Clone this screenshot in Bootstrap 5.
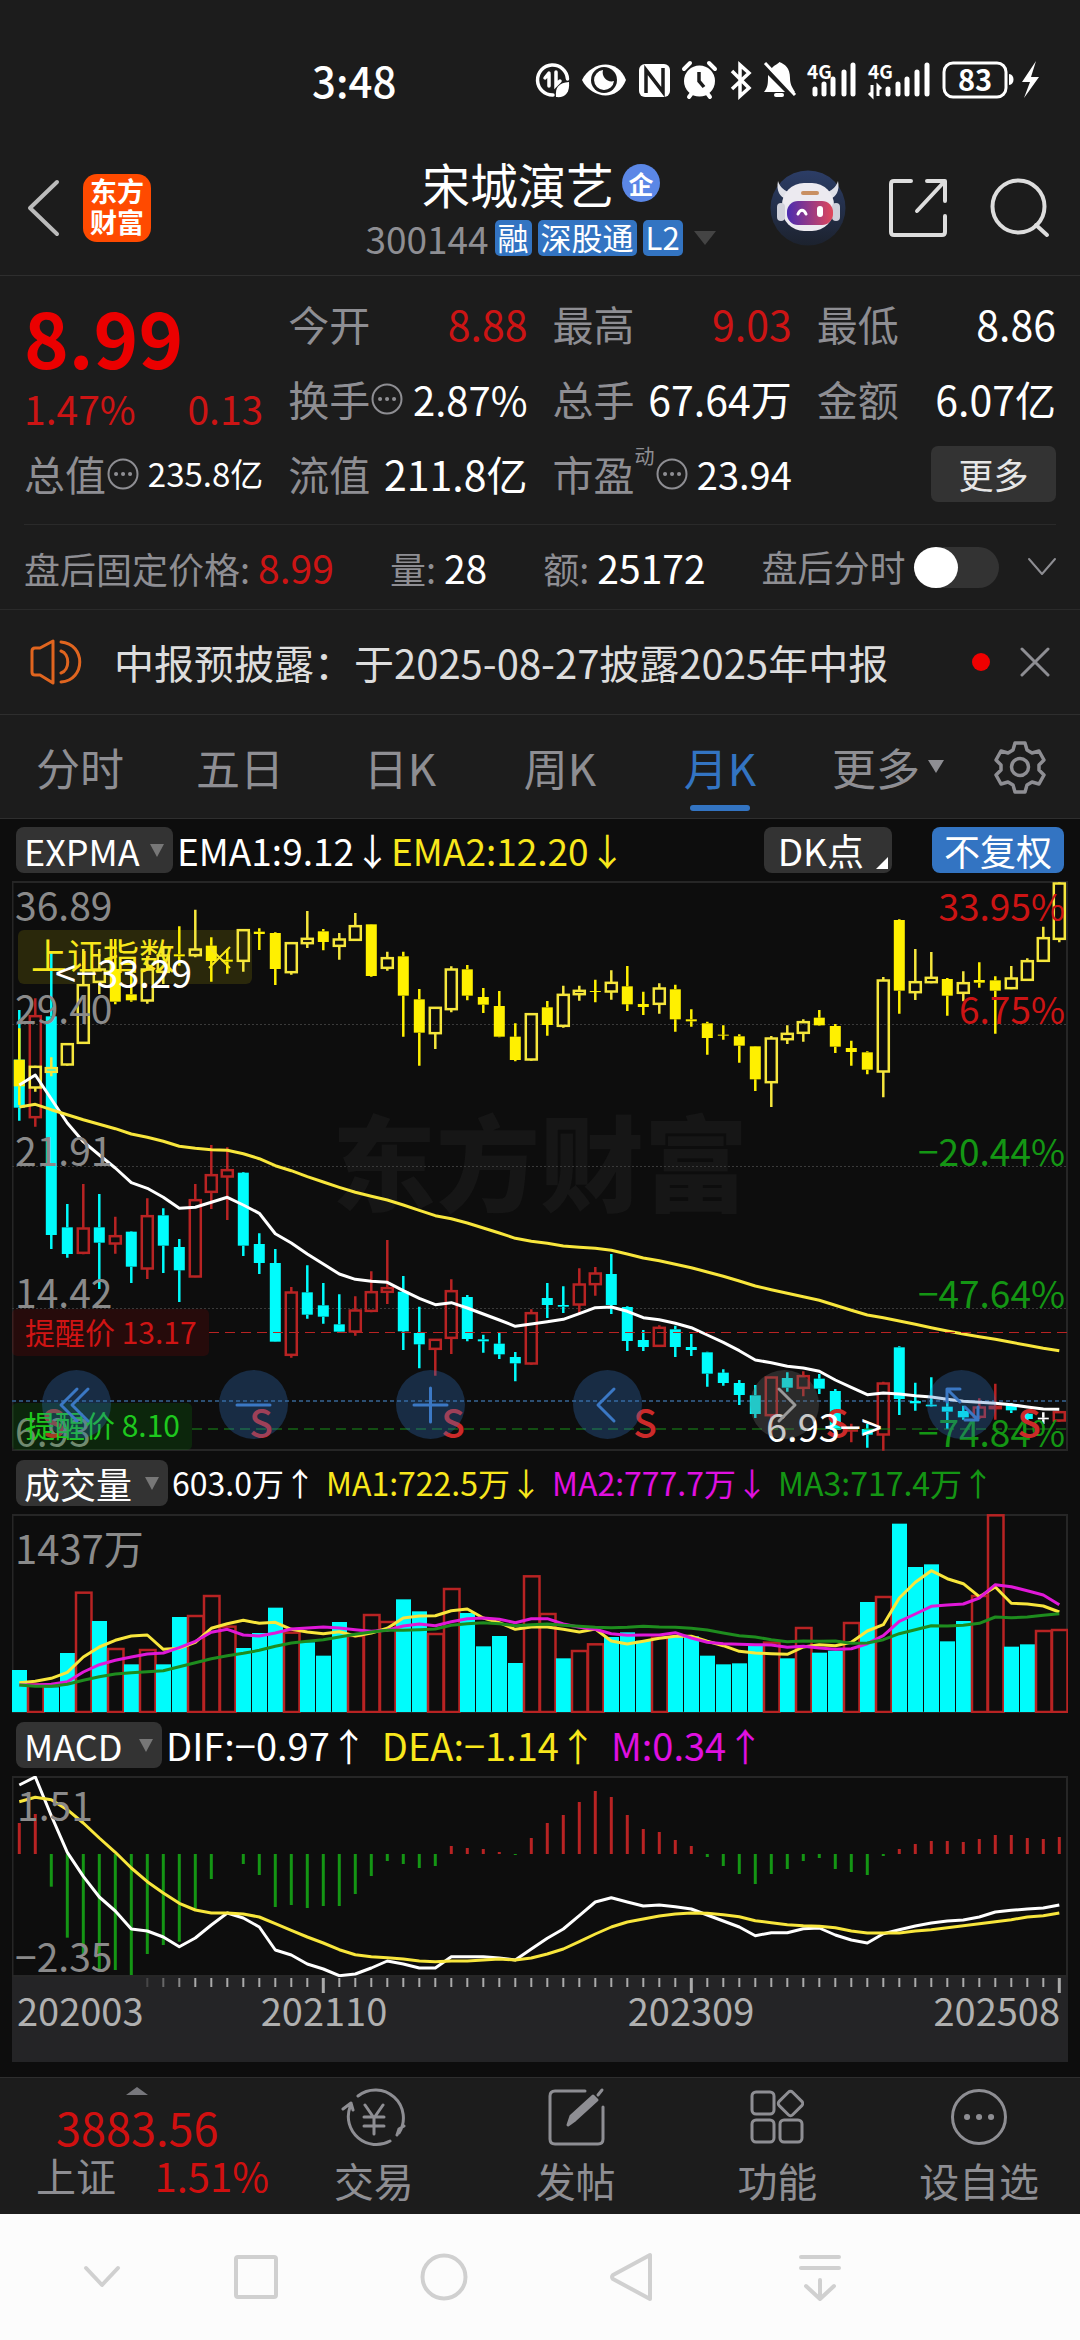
<!DOCTYPE html>
<html lang="zh-CN" data-bs-theme="dark">
<head>
<meta charset="utf-8">
<meta name="viewport" content="width=device-width, initial-scale=1">
<title>宋城演艺 300144</title>
<link href="https://cdn.jsdelivr.net/npm/bootstrap@5.3.0/dist/css/bootstrap.min.css" rel="stylesheet">
<style>
:root{--bg:#1c1c1c;--ink:#0d0d0d;--chip:#333;--blue:#3374c2;--dim:#8e8e93;--up:#cc1414;--edge:#2e2e2e}
body{background:var(--bg);color:#fff;font-family:"Noto Sans CJK SC",sans-serif;font-size:36px;line-height:1.2}
button,a{color:inherit;text-decoration:none}
.plain{background:none;border:0;padding:0;line-height:1}
svg{display:block}
.stroke{fill:none;stroke:currentColor;stroke-linecap:round;stroke-linejoin:round}
.dim{color:var(--dim)}.up{color:var(--up)}
.yel{color:#f8e71c}.mag{color:#e010e0}.grn{color:#149614}
.side{flex:1 1 0}

.sysbar{height:140px;padding:20px 38px 0 312px}
.clock{font-size:42px;font-weight:500}
.topbar{height:136px;border-bottom:1px solid var(--edge);padding:0 30px 0 24px}
.topbar .side:last-child{gap:43px}
.brand{width:68px;height:68px;border-radius:14px;background:#ff4a00;font-size:27px;font-weight:700;line-height:31px;padding-top:1px;margin-left:21px}
.stock{font-size:48px;line-height:54px;font-weight:400}
.corp{width:38px;height:38px;border-radius:50%;background:#5b87e6;font-size:25px;font-weight:700}
.code{font-size:37px;line-height:44px;gap:6px;margin-top:6px}
.flag{background:var(--blue);border-radius:5px;font-size:31px;line-height:34px;height:36px;padding:0 3px}

.quote{padding:10px 24px 13px}
.cells{display:grid;grid-template-columns:repeat(4,minmax(0,1fr));column-gap:25px;grid-auto-rows:75px}
.cell-q{display:flex;align-items:center;white-space:nowrap;font-size:41px}
.cell-q .dim{font-size:41px}
.last{color:#eb0000;font-size:76px;font-weight:700;line-height:78px}
.lead-cell{grid-row:span 2;padding-top:6px;gap:10px}
.lead-cell .cell-q{font-size:39px}
.mid-num{font-size:40px}
.sm-num{font-size:38px}
.sm-cap{font-size:33px}
.tiny{font-size:20px;line-height:24px;height:60px}
.morebtn{width:125px;height:56px;border-radius:7px;background:var(--chip);font-size:35px;color:#e6e6e6;line-height:50px}
.after{height:85px;border-top:1px solid #2a2a2a;margin:0 24px;font-size:36px;white-space:nowrap;gap:56px}
.after b{font-weight:400;font-size:39px}
.tog.form-check-input{width:85px;height:41px;margin:0;border:0;border-radius:21px;background-color:#333;background-image:none;position:relative}
.tog::before{content:"";position:absolute;left:0;top:0;width:44px;height:41px;border-radius:50%;background:#fff}
.news{height:105px;border-top:1px solid #2a2a2a;padding:0 30px;font-size:40px;color:#ddd}
.news a{padding-left:32px}
.news button{margin-left:30px}
.reddot{width:18px;height:18px;border-radius:50%;background:#f00000}
.tabs{height:105px;border-top:1px solid var(--edge);border-bottom:1px solid var(--edge)}
.tabs button{flex:4 1 0;height:100%;font-size:44px;color:var(--dim);position:relative}
.tabs .gear{flex:3 1 0}
.tabs .on{color:var(--blue)}
.tabs .on::after{content:"";position:absolute;left:50%;bottom:7px;width:60px;height:6px;margin-left:-30px;border-radius:3px;background:var(--blue)}

.charts{background:var(--ink);padding:0 12px 15px}
.legend-row{height:62px;padding:0 4px;white-space:nowrap;font-size:37px}
.legend-row.low{height:63px}
.pick{position:relative;display:block}
.pick select{appearance:none;display:block;height:46px;border:0;border-radius:8px;background:var(--chip);color:#fff;font-size:36px;line-height:46px;padding:0 0 0 8px;width:157px}
.pick svg{position:absolute;right:9px;top:17px}
.pick.w2 select{width:152px}.pick.w3 select{width:146px}
.vol-nums{font-size:32px;gap:10px}
.macd-nums{font-size:38px;gap:14px}
.chip-btn{height:46px;border-radius:8px;background:var(--chip);font-size:37px;padding:0 28px 0 14px;position:relative}
.chip-btn.solid{background:var(--blue);padding:0 12px;font-size:36px;margin-left:40px}
.pane{position:relative}
.pane svg.plot{width:100%;height:auto}
.plot text{font-family:"Noto Sans CJK SC",sans-serif}
.tools{position:absolute;left:30px;right:72px;bottom:12px}
.tools button{width:69px;height:69px;border-radius:50%;background:rgba(51,116,196,.3);color:#3b78c4}
.tools button:disabled{background:rgba(100,100,100,.35);color:#999}
.axis{background:#242426}

.dock{border-top:1px solid var(--edge);height:137px;color:var(--dim)}
.idx{width:273px;padding:9px 0 0}
.idx .n1{font-size:45px;line-height:48px;padding-left:56px}
.idx .n2{font-size:40px;line-height:48px;padding-left:36px}
.idx .n1,.idx .n2 span{color:#d01010}
.dock .item{flex:1 1 0;font-size:40px;line-height:48px;padding-top:9px;gap:7px}
.phone{background:#fcfcfc;height:126px;color:#d0d0d0;padding-left:42px}
.phone button{width:188px}.phone button:first-child{width:120px}
</style>
<script src="https://cdn.jsdelivr.net/npm/bootstrap@5.3.0/dist/js/bootstrap.bundle.min.js"></script>
</head>
<body>
<div class="sysbar d-flex align-items-center justify-content-between">
  <span class="clock">3:48</span>
  <svg width="510" height="44" viewBox="532 59 510 44" fill="#fff" aria-hidden="true">
    <g fill="none" stroke="#fff" stroke-width="3.5" stroke-linecap="round">
      <path d="M553 96a15 15 0 1 1 14.500-16"/><path d="M549 75v12M549 74l-4 5M556 73v13l4-4"/>
    </g>
    <path d="M556 98c-1-10 3-14 13-15 1 11-4 16-13 15z"/>
    <path d="M582 81c9-18 35-23 44 0-9 23-35 18-44 0z"/><circle cx="604" cy="81" r="13" fill="#1c1c1c"/><path d="M603 71a10 10 0 1 0 11 11c-6 2-13-4-11-11z"/>
    <rect x="639" y="65" width="31" height="33" rx="6"/><path d="M646 94V71l17 22V69" fill="none" stroke="#1c1c1c" stroke-width="3.500"/>
    <circle cx="699.500" cy="82" r="15.500"/><path d="M699 73v9l5 6" fill="none" stroke="#1c1c1c" stroke-width="3.500"/><path d="M684 70l6-6M715 70l-6-6M689 98l3-4M710 98l-3-4" stroke="#fff" stroke-width="4" stroke-linecap="round"/>
    <path d="M732 72l17 17-9 8V66l9 8-17 16" fill="none" stroke="#fff" stroke-width="3.500"/>
    <path d="M764 93c4-5 4-8 4-17l17 17zM770 71c6-7 9-6 9-8 6 2 11 6 11 16 0 6 2 9 5 14l-2 1z"/><path d="M765 64l30 32" stroke="#fff" stroke-width="3"/><rect x="774" y="94" width="10" height="4" rx="2"/>
    <text x="807" y="80" font-size="19" font-weight="700" font-family="Noto Sans CJK SC">4G</text>
    <g stroke="#fff" stroke-width="5" stroke-linecap="round"><path d="M815 90v5M824 85v10M833 80v15M844 73v22M853 66v29"/><path d="M888 90v5M898 85v10M907 80v15M917 73v22M927 66v29"/></g>
    <path d="M872 86v11l-3-3M878 97V87l3 3" fill="none" stroke="#fff" stroke-width="3"/>
    <text x="868" y="80" font-size="19" font-weight="700" font-family="Noto Sans CJK SC">4G</text>
    <rect x="944" y="64" width="62" height="34" rx="9" fill="none" stroke="#fff" stroke-width="3"/><path d="M1009 75c6 0 6 11 0 11z"/>
    <text x="975" y="92" font-size="29" font-weight="700" text-anchor="middle" font-family="Noto Sans CJK SC">83</text>
    <path d="M1036 62l-14 21h8l-6 16 15-21h-8z"/>
  </svg>
</div>

<header class="topbar d-flex align-items-center">
  <div class="side d-flex align-items-center">
    <button class="plain" aria-label="返回"><svg class="stroke" width="38" height="60" viewBox="0 0 38 60" stroke-width="4" color="#bbb"><path d="M33 4L6 30l27 26"/></svg></button>
    <a href="#" class="brand text-center text-white d-block">东方<br>财富</a>
  </div>
  <div class="d-flex flex-column align-items-center ps-2">
    <div class="d-flex align-items-center gap-2"><h1 class="stock m-0">宋城演艺</h1><span class="corp d-flex align-items-center justify-content-center">企</span></div>
    <div class="code d-flex align-items-center dim">
      <span>300144</span><span class="flag text-white">融</span><span class="flag text-white">深股通</span><span class="flag text-white">L2</span>
      <svg class="ms-1" width="24" height="14" viewBox="0 0 24 14" fill="#444"><path d="M1 0h22L12 14z"/></svg>
    </div>
  </div>
  <div class="side d-flex align-items-center justify-content-end">
    <button class="plain" aria-label="助手"><svg width="76" height="76" viewBox="0 0 76 76">
      <defs><linearGradient id="rg" x1="0" x2="1"><stop offset="0" stop-color="#4b2bb0"/><stop offset="1" stop-color="#e0485a"/></linearGradient><linearGradient id="rb" x1="0" x2="0" y2="1"><stop offset="0" stop-color="#2c3d66"/><stop offset="1" stop-color="#1c222e"/></linearGradient></defs>
      <circle cx="38" cy="38" r="37.500" fill="url(#rb)"/>
      <path d="M8 11c-2 10 2 16 8 18l6-6C14 21 10 17 8 11zM68 11c2 10-2 16-8 18l-6-6c8-2 12-6 14-12z" fill="#dfe0e8"/>
      <rect x="12" y="13" width="52" height="48" rx="22" fill="#eceaf0"/><rect x="7" y="33" width="8" height="18" rx="4" fill="#cfd0da"/><rect x="62" y="33" width="8" height="18" rx="4" fill="#cfd0da"/>
      <rect x="17" y="31" width="46" height="24" rx="11" fill="url(#rg)"/><rect x="31" y="21" width="18" height="4" rx="2" fill="#c98f62"/>
      <path d="M28 44c2-5 6-5 8 0" fill="none" stroke="#fff" stroke-width="3" stroke-linecap="round"/><rect x="47" y="36" width="6" height="11" rx="3" fill="#fff"/>
    </svg></button>
    <button class="plain" aria-label="分享"><svg class="stroke" width="58" height="58" viewBox="0 0 58 58" stroke-width="4" color="#ddd"><path d="M22 2H5q-3 0-3 3v48q0 3 3 3h48q3 0 3-3V37M38 2h18v20M55 3L28 32"/></svg></button>
    <button class="plain" aria-label="搜索"><svg class="stroke" width="60" height="60" viewBox="0 0 60 60" stroke-width="4" color="#ddd"><circle cx="28.500" cy="28.500" r="26"/><path d="M46 47l11 10"/></svg></button>
  </div>
</header>

<section class="quote">
  <div class="cells">
    <div class="lead-cell d-flex flex-column justify-content-center">
      <div class="last">8.99</div>
      <div class="cell-q justify-content-between up"><span>1.47%</span><span>0.13</span></div>
    </div>
    <div class="cell-q justify-content-between"><span class="dim">今开</span><span class="up">8.88</span></div>
    <div class="cell-q justify-content-between"><span class="dim">最高</span><span class="up">9.03</span></div>
    <div class="cell-q justify-content-between"><span class="dim">最低</span><span>8.86</span></div>
    <div class="cell-q justify-content-between"><span class="dim d-flex align-items-center">换手<svg class="stroke" width="34" height="34" viewBox="0 0 34 34" stroke-width="2"><circle cx="17" cy="17" r="14.500"/><path d="M10 17h.1M17 17h.1M24 17h.1" stroke-width="4"/></svg></span><span class="mid-num">2.87%</span></div>
    <div class="cell-q justify-content-between"><span class="dim">总手</span><span>67.64万</span></div>
    <div class="cell-q justify-content-between"><span class="dim">金额</span><span>6.07亿</span></div>
    <div class="cell-q justify-content-between"><span class="dim d-flex align-items-center">总值<svg class="stroke" width="34" height="34" viewBox="0 0 34 34" stroke-width="2"><circle cx="17" cy="17" r="14.500"/><path d="M10 17h.1M17 17h.1M24 17h.1" stroke-width="4"/></svg></span><span class="sm-cap">235.8亿</span></div>
    <div class="cell-q justify-content-between"><span class="dim">流值</span><span>211.8亿</span></div>
    <div class="cell-q justify-content-between"><span class="dim d-flex align-items-center">市盈<small class="tiny">动</small><svg class="stroke" width="34" height="34" viewBox="0 0 34 34" stroke-width="2"><circle cx="17" cy="17" r="14.500"/><path d="M10 17h.1M17 17h.1M24 17h.1" stroke-width="4"/></svg></span><span class="sm-num">23.94</span></div>
    <div class="cell-q justify-content-end"><button class="plain morebtn">更多</button></div>
  </div>
</section>

<section class="after d-flex align-items-center">
  <span><span class="dim">盘后固定价格:</span> <b class="up">8.99</b></span>
  <span><span class="dim">量:</span> <b>28</b></span>
  <span><span class="dim">额:</span> <b>25172</b></span>
  <span class="d-flex align-items-center ms-auto"><label class="dim me-2" for="afterSw">盘后分时</label><input class="form-check-input tog" type="checkbox" role="switch" id="afterSw">
  <button class="plain dim ms-4 me-1 ps-1" aria-label="展开"><svg class="stroke" width="30" height="20" viewBox="0 0 30 20" stroke-width="2"><path d="M2 2l13 15L28 2"/></svg></button></span>
</section>

<section class="news d-flex align-items-center">
  <svg class="stroke" width="52" height="46" viewBox="0 0 52 46" stroke-width="3" color="#e0651f"><path d="M2 12q0-3 3-3h5L23 2v42L10 36H5q-3 0-3-3zM31 12c9 3 9 19 0 22M31 3c25 2 25 38 0 40"/></svg>
  <a href="#" class="flex-grow-1 text-nowrap">中报预披露：于2025-08-27披露2025年中报</a>
  <span class="reddot"></span>
  <button class="plain dim" aria-label="关闭"><svg class="stroke" width="30" height="30" viewBox="0 0 30 30" stroke-width="3"><path d="M2 2l26 26M28 2L2 28"/></svg></button>
</section>

<nav class="tabs d-flex align-items-center">
  <button class="plain">分时</button><button class="plain">五日</button><button class="plain">日K</button><button class="plain">周K</button><button class="plain on" aria-current="true">月K</button>
  <button class="plain"><span class="d-flex align-items-center justify-content-center gap-2 ps-3">更多<svg width="16" height="13" viewBox="0 0 16 13" fill="currentColor"><path d="M0 0h16L8 13z"/></svg></span></button>
  <button class="plain gear d-flex align-items-center justify-content-center" aria-label="设置"><svg class="stroke" width="54" height="54" viewBox="0 0 54 54" stroke-width="3.500"><path d="M22 3h10l2 7 5 3 7-2 5 9-5 5v5l5 5-5 9-7-2-5 3-2 7H22l-2-7-5-3-7 2-5-9 5-5v-5l-5-5 5-9 7 2 5-3z"/><circle cx="27" cy="27" r="8.500"/></svg></button>
</nav>

<main class="charts">
  <div class="legend-row d-flex align-items-center">
    <label class="pick"><select aria-label="主图指标"><option>EXPMA</option></select><svg width="14" height="13" viewBox="0 0 14 13" fill="#777"><path d="M0 0h14L7 13z"/></svg></label>
    <span class="ms-1">EMA1:9.12↓</span><span class="yel">EMA2:12.20↓</span>
    <button class="plain chip-btn ms-auto">DK点<svg class="position-absolute end-0 bottom-0 me-1 mb-1" width="12" height="12" viewBox="0 0 12 12" fill="#fff"><path d="M12 0v12H0z"/></svg></button>
    <button class="plain chip-btn solid">不复权</button>
  </div>
  <div class="pane">
    <svg class="plot" id="kline" viewBox="12 882 1056 570" role="img" aria-label="月K线图"></svg>
    <div class="tools d-flex justify-content-between">
      <button class="plain" aria-label="最早"><svg class="stroke" width="69" height="69" viewBox="0 0 69 69" stroke-width="3"><path d="M35 19L19 35l16 16M46 19L30 35l16 16"/></svg></button>
      <button class="plain" aria-label="缩小"><svg class="stroke" width="69" height="69" viewBox="0 0 69 69" stroke-width="3"><path d="M18 35h33"/></svg></button>
      <button class="plain" aria-label="放大"><svg class="stroke" width="69" height="69" viewBox="0 0 69 69" stroke-width="3"><path d="M18 35h33M34.500 18v34"/></svg></button>
      <button class="plain" aria-label="左移"><svg class="stroke" width="69" height="69" viewBox="0 0 69 69" stroke-width="3"><path d="M41 19L25 35l16 16"/></svg></button>
      <button class="plain" aria-label="右移" disabled><svg class="stroke" width="69" height="69" viewBox="0 0 69 69" stroke-width="3"><path d="M29 19l16 16-16 16"/></svg></button>
      <button class="plain" aria-label="全屏"><svg class="stroke" width="69" height="69" viewBox="0 0 69 69" stroke-width="3"><path d="M33 19H20v13M20 19l13 13M51 37v13H38M51 50L38 37"/></svg></button>
    </div>
  </div>
  <div class="legend-row low d-flex align-items-center">
    <label class="pick w2"><select aria-label="副图一"><option>成交量</option></select><svg width="14" height="13" viewBox="0 0 14 13" fill="#777"><path d="M0 0h14L7 13z"/></svg></label>
    <div class="vol-nums d-flex ms-1"><span>603.0万↑</span><span class="yel">MA1:722.5万↓</span><span class="mag">MA2:777.7万↓</span><span class="grn">MA3:717.4万↑</span></div>
  </div>
  <div class="pane"><svg class="plot" id="vol" viewBox="12 1515 1056 199" role="img" aria-label="成交量"></svg></div>
  <div class="legend-row low d-flex align-items-center">
    <label class="pick w3"><select aria-label="副图二"><option>MACD</option></select><svg width="14" height="13" viewBox="0 0 14 13" fill="#777"><path d="M0 0h14L7 13z"/></svg></label>
    <div class="macd-nums d-flex ms-1"><span>DIF:−0.97↑</span><span class="yel">DEA:−1.14↑</span><span class="mag">M:0.34↑</span></div>
  </div>
  <div class="pane"><svg class="plot" id="macd" viewBox="12 1777 1056 201" role="img" aria-label="MACD"></svg></div>
  <div class="axis"><svg class="plot w-100 h-auto" id="axis" viewBox="12 1978 1056 85" role="img" aria-label="时间轴"></svg></div>
</main>

<footer class="dock d-flex">
  <a href="#" class="idx d-block">
    <svg class="ms-auto me-auto" width="22" height="8" viewBox="0 0 22 8" fill="#77777c"><path d="M11 0l11 8H0z"/></svg>
    <span class="n1 d-block mt-2">3883.56</span>
    <span class="n2 d-flex justify-content-between">上证<span class="pe-1">1.51%</span></span>
  </a>
  <button class="plain item d-flex flex-column align-items-center"><svg class="stroke" width="66" height="62" viewBox="0 0 66 62" stroke-width="3"><path d="M17 9a28 28 0 0 1 41 37M49 54A28 28 0 0 1 9 20M2 22l8-6 2 7M56 48l2-6 5-3M24 18l9 13 9-13M33 31v16M23 30h20M23 39h20"/></svg>交易</button>
  <button class="plain item d-flex flex-column align-items-center"><svg class="stroke" width="58" height="62" viewBox="0 0 58 62" stroke-width="3"><path d="M38 4H8Q3 4 3 9v43q0 5 5 5h43q5 0 5-5V20"/><path d="M21 38l3-9 22-20 4 4-22 20zM51 8l4-5" fill="currentColor"/></svg>发帖</button>
  <button class="plain item d-flex flex-column align-items-center"><svg class="stroke" width="54" height="62" viewBox="0 0 54 62" stroke-width="3"><rect x="2" y="5" width="22" height="22" rx="4"/><rect x="2" y="33" width="22" height="22" rx="4"/><rect x="30" y="33" width="22" height="22" rx="4"/><rect x="31" y="7" width="19" height="19" rx="3" transform="rotate(45 40.500 16.500)"/></svg>功能</button>
  <button class="plain item d-flex flex-column align-items-center"><svg class="stroke" width="58" height="62" viewBox="0 0 58 62" stroke-width="3"><circle cx="29" cy="30" r="26.500"/><path d="M17 30h.1M29 30h.1M41 30h.1" stroke-width="6"/></svg>设自选</button>
</footer>
<div class="phone d-flex align-items-center">
  <button class="plain d-flex justify-content-center" aria-label="收起"><svg class="stroke" width="48" height="50" viewBox="0 0 48 50" stroke-width="4"><path d="M8 16l16 17 16-17"/></svg></button>
  <button class="plain d-flex justify-content-center" aria-label="最近"><svg class="stroke" width="48" height="50" viewBox="0 0 48 50" stroke-width="4"><rect x="4" y="5" width="40" height="40" rx="2"/></svg></button>
  <button class="plain d-flex justify-content-center" aria-label="主屏"><svg class="stroke" width="48" height="50" viewBox="0 0 48 50" stroke-width="4"><circle cx="24" cy="25" r="21.500"/></svg></button>
  <button class="plain d-flex justify-content-center" aria-label="后退"><svg class="stroke" width="48" height="50" viewBox="0 0 48 50" stroke-width="4"><path d="M42 3v44L5 27q-2-2 0-4z"/></svg></button>
  <button class="plain d-flex justify-content-center" aria-label="通知"><svg class="stroke" width="48" height="50" viewBox="0 0 48 50" stroke-width="4"><path d="M5 5h38M5 16h38M24 28v19M10 34l14 13 14-13"/></svg></button>
</div>

<script>
// One month per 16 units; heights are stored in thirds of a unit from each pane's base.
const X = i => 19.3 + 16 * i;
const n = s => s.trim().split(/[\s,]+/).map(Number);
const line = (vals, base, col, w = 3) => `<polyline fill="none" stroke="${col}" stroke-width="${w}" stroke-linejoin="round" points="${n(vals).map((v, i) => X(i).toFixed(1) + ',' + (base + v / 3).toFixed(1)).join(' ')}"/>`;
const text = (x, y, t, col, fs = 37, more = '') => `<text x="${x}" y="${y}" fill="${col}" font-size="${fs}" ${more}>${t}</text>`;
const frame = (y, h) => `<rect x="12.5" y="${y}" width="1054.500" height="${h}" fill="none" stroke="#262626" stroke-width="2"/>`;
const END = 'text-anchor="end"';

// high, body top, body bottom, low
function candles(src, base, colour) {
  return src.trim().split(';').map((row, i) => {
    const kind = row.trim()[0], [h, t, b, l] = n(row.trim().slice(1)).map(v => base + v / 3), c = colour[kind], x = X(i);
    const wick = `<path d="M${x} ${h}V${t}M${x} ${b}V${l}" stroke="${c}" stroke-width="2.5"/>`;
    return 'fcw'.includes(kind)
      ? wick + `<rect x="${x - 5.5}" y="${t}" width="11" height="${Math.max(1, b - t)}" fill="${c}"/>`
      : wick + `<rect x="${x - 5.5}" y="${t + .5}" width="11" height="${Math.max(1, b - t - 1)}" fill="none" stroke="${c}" stroke-width="2.5"/>`;
  }).join('');
}
const index = `f478 572 652 708;h590 592 657 668;h565 596 610 622;h522 524 588 590;h240 347 523 524;h240 300 340 375;f210 300 398 406;f300 376 394 398;h260 300 396 404;h235 258 310 345;f172 256 262 290;h122 240 260 265;f205 230 276 338;f240 272 278 314;h180 182 277 308;f178 188 195 243;f190 192 300 348;h220 221 311 317;h126 208 224 237;f180 187 219 244;h192 210 232 272;h132 170 214 215;f165 166 321 323;h248 266 298 305;f248 262 380 503;f360 391 491 590;h414 415 494 540;h292 300 422 430;f288 301 380 394;f357 384 407 432;f366 411 503 505;f463 503 573 577;h433 434 573 575;f396 415 468 500;h350 376 472 476;h350 364 377 395;f332 366 369 400;h304 340 369 392;f291 352 406 426;f368 405 414 438;h343 357 406 434;f347 361 451 488;f421 451 457 473;f458 463 507 557;f469 497 499 512;f496 502 530 581;f531 532 631 666;h501 507 641 714;h469 493 512 525;h451 458 493 518;f423 446 469 470;f465 471 533 552;f515 537 549 590;f547 550 602 616;h324 333 609 685;f151 153 365 434;h240 338 371 393;h249 325 341 343;f327 330 380 440;h307 341 373 397;f280 333 341 356;f322 334 365 494;h291 327 359 361;h268 275 334 335;h173 206 277 278;h40 42 211 220`;
const stock = `c-417 -268 -124 -85;r-452 -400 -94 -67;c-592 -398 258 300;c165 235 315 326;r105 237 313 316;c135 235 281 420;r203 260 285 314;c247 248 353 402;r148 200 360 390;c178 199 290 372;c270 294 364 459;r105 152 384 385;r-12 77 130 180;r-5 62 84 213;c69 71 290 321;c253 285 342 375;c300 342 578 579;r414 429 619 626;c349 430 497 509;c402 469 503 524;c436 526 548 550;r442 483 549 560;r367 428 487 490;r273 416 430 465;c381 428 547 603;c473 552 586 658;r570 571 601 680;r391 425 568 615;c438 444 570 577;c557 571 577 611;c549 584 616 630;c609 624 643 697;r481 491 645 647;c402 447 468 507;c412 468 473 492;r358 405 468 492;r354 372 407 440;c315 375 468 495;c472 474 576 606;c543 573 594 606;r529 535 592 594;c530 541 594 624;c555 594 603 621;c608 610 674 713;c661 671 702 710;c693 702 738 768;c708 739 795 807;r683 684 800 862;c670 687 716 728;r667 680 718 742;c675 689 719 735;c720 726 843 850;r824 838 846 880;c825 840 857 896;r698 702 858 905;c592 595 750 798;c701 756 763 785;c685 767 772 773;c753 773 788 840;c770 786 805 812;r748 774 805 810;r704 772 779 812;c762 768 784 792;c784 794 810 816;w790 806 811 825;r786 788 816 818`;
const col = {f: '#fff000', h: '#f5e63c', c: '#00fcfc', r: '#b82323', w: '#fff'};
let k = frame(883, 568);
k += text(540, 1205, '东方财富', '#161616', 104, 'font-weight="900" text-anchor="middle"');
k += '<path d="M12 1025.500h1055M12 1167.500h1055M12 1309.500h1055" stroke="#3a3a3a" stroke-dasharray="2 2"/>';
k += '<path d="M12 1402h1055" stroke="#2c4f73" stroke-width="2" stroke-dasharray="4 3"/>';
k += '<rect x="18" y="931" width="234" height="54" rx="6" fill="#fff000" fill-opacity=".12"/>';
k += candles(stock, 1150, col) + candles(index, 870, col);
k += line('-192 -222 -150 -78 -22 18 57 101 118 145 178 175 160 145 168 193 254 282 315 345 375 391 397 400 425 448 467 461 477 495 513 532 525 518 511 494 476 474 487 506 512 523 536 558 580 605 633 641 652 657 667 693 715 737 732 735 740 744 751 757 760 763 767 774 780 781', 1150, '#fff');
k += line('-126 -134 -118 -103 -88 -74 -61 -45 -35 -23 -8 -2 2 4 14 29 50 65 83 99 115 130 142 153 168 184 200 209 222 237 252 268 277 283 291 295 298 304 315 327 335 346 356 369 382 396 411 422 433 443 454 469 484 498 506 516 526 536 546 555 563 571 580 589 598 605', 1150, '#f8e63c');
k += '<path d="M209 1333.500h858" stroke="#b82323" stroke-dasharray="10 6"/><path d="M192 1430h875" stroke="#189018" stroke-dasharray="10 6"/>';
[[36.89, 922], ['29.40', 1025], [21.91, 1167], [14.42, 1309], [6.93, 1448]].forEach(a => k += text(15, a[1], a[0], '#8a8a8a', 39));
[['33.95%', 922], ['6.75%', 1025]].forEach(a => k += text(1065, a[1], a[0], '#cc1414', 37, END));
[['−20.44%', 1167], ['−47.64%', 1309], ['−74.84%', 1448]].forEach(a => k += text(1065, a[1], a[0], '#149614', 37, END));
[53, 261, 453, 645, 837, 1029].forEach(x => k += text(x, 1439, 'S', '#cc2a2a', 39, 'font-weight="500" text-anchor="middle"'));
k += '<rect x="12" y="1310" width="197" height="47" rx="5" fill="#d00000" fill-opacity=".13"/>' + text(25, 1345, '提醒价 13.17', '#d01414', 30);
k += '<rect x="12" y="1404" width="180" height="47" rx="5" fill="#0c8c0c" fill-opacity=".2"/>' + text(25, 1438, '提醒价 8.10', '#1ec81e', 30);
k += text(31, 971, '上证指数', '#f8e71c', 36) + '<path d="M209 948l21 21M230 948l-21 21" stroke="#f8e71c" stroke-width="2"/>';
k += text(55, 989, '&lt;−33.29', '#fff', 38) + text(766, 1443, '6.93−&gt;', '#fff', 38);
document.getElementById('kline').innerHTML = k;

const vols = `c513 r553 c565 c462 r278 c366 r447 c496 r450 c496 c354 r348 r288 r380 c447 c402 c326 r398 c430 c470 c369 r408 r345 r366 c301 c337 r402 r267 c342 c442 c411 c492 r229 r342 c478 r453 r433 c414 c400 c425 r414 c412 c412 c470 c496 c493 c439 r428 c478 r384 c461 c455 r369 c309 r291 c74 c204 c196 c427 c366 r288 r46 c443 c436 r393 r390`;
let v = frame(1516, 197);
v += vols.split(' ').map((s, i) => {
  const y = 1500 + s.slice(1) / 3, x = X(i);
  return s[0] == 'c' ? `<rect x="${x - 7.3}" y="${y}" width="15" height="${1713 - y}" fill="#00fcfc"/>`
    : `<rect x="${x - 7.3}" y="${y + 1}" width="15.500" height="${1712 - y}" fill="#0d0d0d" stroke="#b82323" stroke-width="2.500"/>`;
}).join('');
v += line('551 547 538 520 474 444 424 411 408 451 448 430 388 374 364 373 370 391 399 404 398 411 402 388 357 351 350 335 330 357 371 391 384 384 391 399 390 426 435 427 418 412 412 427 440 457 462 464 466 444 437 440 430 396 377 297 250 215 239 254 293 264 313 315 321 339', 1500, '#f8e63c');
v += line('558 558 556 548 519 497 484 474 465 462 446 427 400 391 408 411 402 390 387 384 387 392 397 394 381 375 380 368 359 357 361 371 359 359 375 385 391 404 409 408 408 401 417 430 434 436 437 438 445 442 447 451 449 434 410 367 345 322 318 315 297 257 263 275 288 317', 1500, '#e018d8');
v += line('558 562 562 556 544 533 525 521 518 515 503 491 479 470 463 454 442 432 427 422 414 406 399 394 394 392 390 379 374 371 374 380 377 375 379 382 385 386 385 382 384 385 388 393 402 410 414 422 428 426 427 426 433 432 422 404 392 380 381 379 373 354 356 354 349 344', 1500, '#1e8c1e');
v += text(15, 1565, '1437万', '#8a8a8a', 40);
document.getElementById('vol').innerHTML = v;

let m = frame(1778, 199);
m += n('162 135 353 506 560 600 603 618 555 528 518 424 330 255 285 318 414 408 417 411 411 375 321 276 285 297 291 231 237 240 249 258 207 162 138 99 66 84 138 180 189 213 231 264 291 315 345 315 300 276 267 300 309 318 261 240 225 216 216 219 210 198 198 207 210 204')
  .map((e, i) => `<path d="M${X(i)} 1855V${1770 + e / 3}" stroke="${e < 255 ? '#b82323' : '#149614'}" stroke-width="3"/>`).join('');
m += line('48 24 140 250 322 384 426 480 486 504 533 507 468 432 447 474 543 558 585 600 620 615 597 576 585 597 597 563 563 563 567 573 540 508 480 440 399 386 399 411 408 413 420 438 456 474 500 491 491 479 477 498 513 522 494 482 471 462 456 453 444 429 424 420 417 408', 1770, '#fff');
m += line('98 85 92 122 162 207 250 297 338 372 403 423 432 432 435 444 464 484 504 522 542 557 563 566 570 576 578 576 576 573 570 573 567 555 540 518 495 474 459 450 441 435 432 433 437 443 455 461 467 470 472 476 486 492 492 492 486 482 476 470 464 458 452 444 440 432', 1770, '#f8e63c');
m += text(17, 1822, '1.51', '#8a8a8a', 39) + text(15, 1973, '−2.35', '#8a8a8a', 39);
document.getElementById('macd').innerHTML = m;

let a = '';
for (let i = 8; i < 66; i++) {
  const long = i == 19 || i == 42 || i == 65;
  a += `<path d="M${X(i)} 1979V${long ? 1994 : 1988}" stroke="#aaa" stroke-width="${long ? 3 : 2}" opacity="${Math.min(1, (i - 7) / 4)}"/>`;
}
a += text(17, 2027, '202003', '#b0b0b0', 38) + text(324, 2027, '202110', '#b0b0b0', 38, 'text-anchor="middle"') + text(691, 2027, '202309', '#b0b0b0', 38, 'text-anchor="middle"') + text(1060, 2027, '202508', '#b0b0b0', 38, END);
document.getElementById('axis').innerHTML = a;
</script>
</body>
</html>
